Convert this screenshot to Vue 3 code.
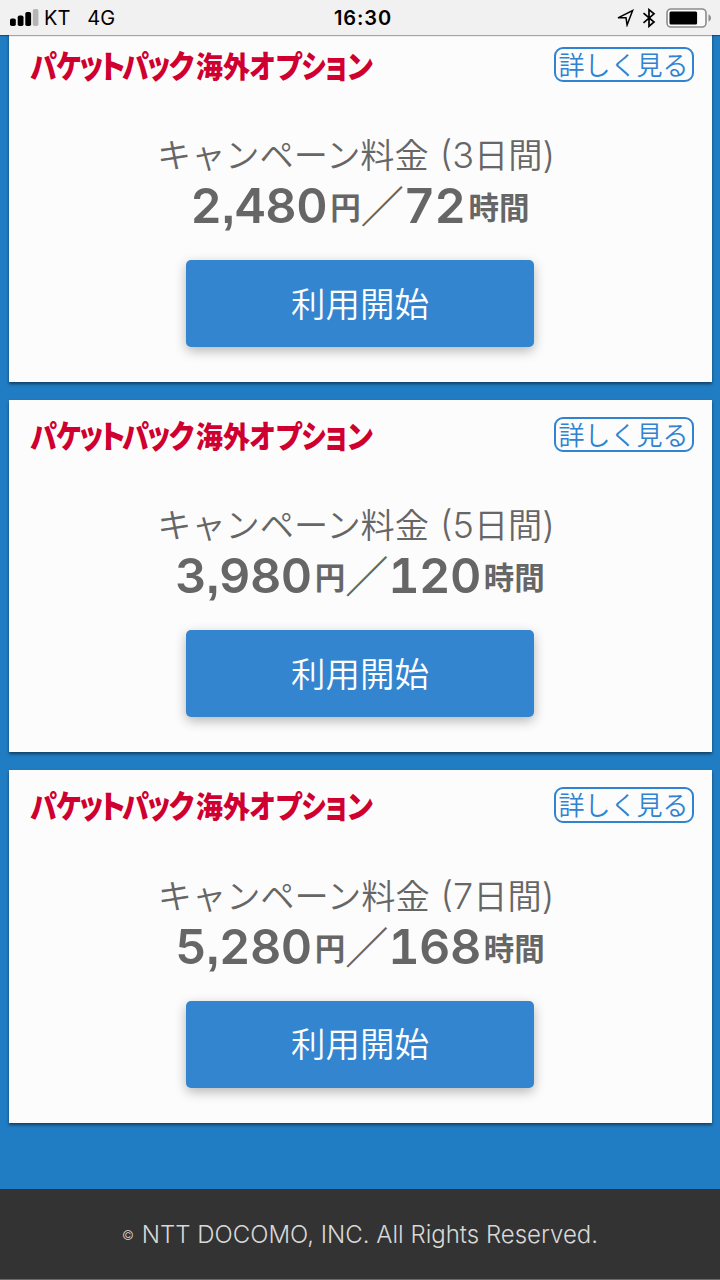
<script setup>
import { ref } from 'vue'

const plans = ref([
  { days: 3, price: ['2', '480'], hours: '72' },
  { days: 5, price: ['3', '980'], hours: '120' },
  { days: 7, price: ['5', '280'], hours: '168' }
])

// left edge, width and font size of each glyph in the plan logo
const logo = [
  { c: 'パ', x: 30, w: 27, s: 31 },
  { c: 'ケ', x: 56, w: 26, s: 32 },
  { c: 'ッ', x: 77, w: 28, s: 35 },
  { c: 'ト', x: 97, w: 30, s: 32 },
  { c: 'パ', x: 122, w: 27, s: 31 },
  { c: 'ッ', x: 145, w: 27, s: 35 },
  { c: 'ク', x: 168, w: 28, s: 32 },
  { c: '海', x: 196, w: 27, s: 29 },
  { c: '外', x: 223, w: 27, s: 29 },
  { c: 'オ', x: 249, w: 27, s: 32 },
  { c: 'プ', x: 275, w: 28, s: 31 },
  { c: 'シ', x: 301, w: 26, s: 32 },
  { c: 'ョ', x: 322, w: 28, s: 35 },
  { c: 'ン', x: 346, w: 28, s: 32 }
]
</script>

<template>
  <div class="screen">
    <header class="status">
      <div class="side">
        <svg class="signal" width="28" height="18" viewBox="0 0 28 18">
          <rect x="0" y="10.5" width="5.8" height="7.5" rx="1.8" />
          <rect x="7.7" y="7.5" width="5.8" height="10.5" rx="1.8" />
          <rect x="15.3" y="4" width="5.8" height="14" rx="1.8" />
          <rect x="22.8" y="1" width="5.6" height="17" rx="1.8" fill="#b5b5b5" />
        </svg>
        <span class="carrier">KT</span>
        <span class="network">4G</span>
      </div>
      <div class="clock">16:30</div>
      <div class="side right">
        <svg width="18" height="18" viewBox="0 0 18 18" fill="none" stroke="#000" stroke-width="1.5">
          <path d="M1 8.8 15.6 1.6 10.1 16 9 8.8Z" />
        </svg>
        <svg class="bluetooth" width="14" height="20" viewBox="0 0 14 20" fill="none" stroke="#000" stroke-width="1.7">
          <path d="M1.5 5.2 12 14 7 18.3V1.7L12 5.8 1.5 14.8" />
        </svg>
        <svg class="battery" width="46" height="20" viewBox="0 0 46 20">
          <rect x="1" y="1" width="39" height="18" rx="4" fill="#fafafa" stroke="#8c8c8c" stroke-width="1.6" />
          <rect x="3.5" y="3.6" width="27.6" height="12.8" rx="1.5" />
          <path d="M42.5 6.5C45.8 7.7 45.8 12.3 42.5 13.5Z" fill="#8c8c8c" />
        </svg>
      </div>
    </header>

    <main class="plans">
      <section v-for="plan in plans" :key="plan.days" class="card">
        <div class="card-head">
          <svg class="logo" width="350" height="36" viewBox="28 0 350 36">
            <text
              v-for="(g, i) in logo"
              :key="i"
              :transform="`translate(${g.x} 31) scale(${g.w / g.s} 1)`"
              :font-size="g.s"
            >{{ g.c }}</text>
          </svg>
          <a class="detail">詳しく見る</a>
        </div>
        <p class="label">キャンペーン料金<span class="days"><i>({{ plan.days }}</i>日間<i>)</i></span></p>
        <p class="price">
          <span class="num">{{ plan.price[0] }}<span class="comma">,</span>{{ plan.price[1] }}</span>
          <span class="unit">円</span>
          <span class="slash">／</span>
          <span class="num">{{ plan.hours }}</span>
          <span class="unit">時間</span>
        </p>
        <button class="start">利用開始</button>
      </section>
    </main>

    <footer class="footer"><span class="copy">©</span>NTT DOCOMO, INC. All Rights Reserved.</footer>
  </div>
</template>

<style>
body {
  margin: 0;
  overflow: hidden;
}
</style>

<style scoped>
.screen {
  display: flex;
  flex-direction: column;
  width: 720px;
  height: 1280px;
  overflow: hidden;
  background: #207dc4;
  font-family: "Noto Sans CJK JP", sans-serif;
  font-weight: 350;
  color: #666;
}

.status {
  position: relative;
  z-index: 1;
  display: flex;
  align-items: center;
  flex-shrink: 0;
  box-sizing: border-box;
  height: 35px;
  padding: 1px 8px 0 10px;
  background: #f1f1f1;
  box-shadow: 0 1px 1px rgba(0, 0, 0, 0.35);
  color: #000;
  font-family: Inter, sans-serif;
  font-weight: 400;
  font-size: 20px;
}

.side {
  display: flex;
  align-items: center;
  flex: 1;
}

.right {
  justify-content: flex-end;
}

.signal {
  margin-top: -2px;
  overflow: visible;
}

.carrier {
  margin-left: 6px;
}

.network {
  margin-left: 17px;
}

.clock {
  margin-left: 4px;
  font-weight: 600;
  letter-spacing: 0.9px;
}

.bluetooth {
  margin-left: 7px;
}

.battery {
  margin-left: 10px;
}

.plans {
  display: flex;
  flex-direction: column;
  gap: 17.8px;
  margin: -5.5px 8.5px 0;
}

.card {
  display: flex;
  flex-direction: column;
  align-items: center;
  box-sizing: border-box;
  height: 352.5px;
  flex-shrink: 0;
  background: #fcfcfc;
  box-shadow: 0 2px 3px rgba(0, 0, 0, 0.5);
}

.card-head {
  display: flex;
  justify-content: space-between;
  align-self: stretch;
  height: 36px;
  padding: 17px 18px 0 19.5px;
}

.logo {
  overflow: visible;
}

.logo text {
  font-weight: 900;
  fill: #cf0030;
}

.detail {
  box-sizing: border-box;
  width: 140px;
  height: 35.5px;
  border: 2px solid #2f83d0;
  border-radius: 9px;
  color: #2f83d0;
  font-size: 26px;
  line-height: 29px;
  text-align: center;
  white-space: nowrap;
}

.label {
  margin: 44.5px 8px 0 0;
  height: 52px;
  font-size: 34.2px;
  line-height: 52px;
  white-space: nowrap;
}

.days {
  margin-left: 11px;
}

.days i {
  font-family: Inter, sans-serif;
  font-style: normal;
  font-weight: 300;
  font-size: 36px;
}

.price {
  display: flex;
  align-items: baseline;
  height: 60px;
  margin: -5px 0 0;
  line-height: 60px;
  white-space: nowrap;
}

.num {
  font-family: Inter, sans-serif;
  font-size: 48.5px;
  font-weight: 600;
  font-variant-numeric: tabular-nums;
  letter-spacing: -0.5px;
}

.comma {
  font-family: "Liberation Sans", sans-serif;
}

.unit {
  margin-left: 3px;
  font-size: 30.5px;
  font-weight: 700;
  transform: translateY(-4px);
}

.slash {
  width: 43px;
  font-size: 43px;
  font-weight: 700;
}

.start {
  width: 348px;
  height: 87px;
  margin-top: 26px;
  padding: 0 0 4px;
  border: 0;
  border-radius: 5px;
  background: #3385d0;
  box-shadow: 0 4px 12px rgba(0, 0, 0, 0.28);
  color: #fff;
  font-family: inherit;
  font-size: 34.5px;
  font-weight: 350;
}

.footer {
  display: flex;
  align-items: baseline;
  justify-content: center;
  box-sizing: border-box;
  height: 90px;
  margin-top: auto;
  margin-bottom: 1px;
  background: #333;
  color: #d8d8d8;
  font-family: Inter, sans-serif;
  font-weight: 300;
  font-size: 24px;
  line-height: 91px;
}

.copy {
  margin-right: 8px;
  font-size: 13px;
  transform: translateY(-3px);
}
</style>
